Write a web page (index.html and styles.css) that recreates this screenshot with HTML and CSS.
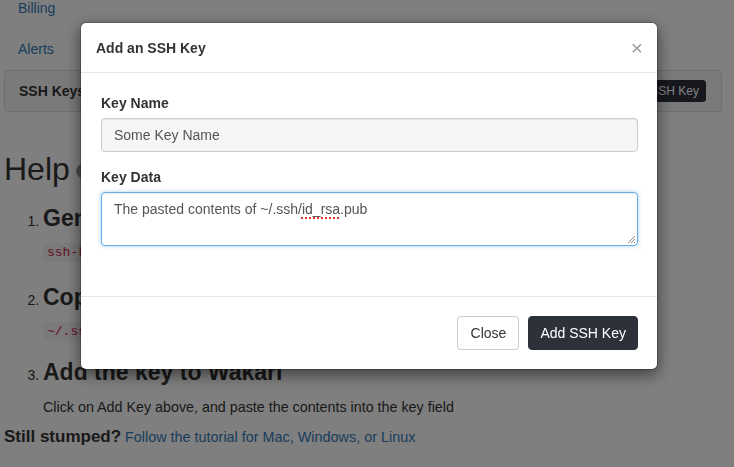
FILE: index.html
```html
<!DOCTYPE html>
<html>
<head>
<meta charset="utf-8">
<link rel="stylesheet" href="styles.css">
</head>
<body>
<div class="page">
  <ul class="nav">
    <li><a href="#">Billing</a></li>
    <li><a href="#">Alerts</a></li>
  </ul>
  <div class="panel">
    <span class="panel-title">SSH Keys</span>
    <button class="btn-xs">Add SSH Key</button>
  </div>
  <h1 class="help">Help <span class="help-icon"></span></h1>
  <ol class="steps">
    <li>
      <h3>Generate an SSH key</h3>
      <p><code>ssh-keygen -t rsa -C "you@example.com"</code></p>
    </li>
    <li class="second">
      <h3>Copy the public key</h3>
      <p><code>~/.ssh/id_rsa.pub</code></p>
    </li>
    <li>
      <h3>Add the key to Wakari</h3>
      <p class="plain">Click on Add Key above, and paste the contents into the key field</p>
    </li>
  </ol>
  <p class="stumped"><strong>Still stumped?</strong> <a href="#">Follow the tutorial for Mac, Windows, or Linux</a></p>
</div>

<div class="backdrop"></div>

<div class="modal">
  <div class="modal-header">
    <h4 class="modal-title">Add an SSH Key</h4>
    <span class="close">&times;</span>
  </div>
  <div class="modal-body">
    <div class="form-group">
      <label>Key Name</label>
      <div class="form-control">Some Key Name</div>
    </div>
    <div class="form-group">
      <label>Key Data</label>
      <div class="form-control textarea">The pasted contents of ~/.ssh/<span class="typo">id_rsa</span>.pub<svg class="grip" width="9" height="9" viewBox="0 0 9 9"><path d="M8 1 L1 8 M8 4 L4 8 M8 7 L7 8" stroke="#888" stroke-width="1" fill="none"/></svg></div>
    </div>
  </div>
  <div class="modal-footer">
    <button class="btn btn-default">Close</button>
    <button class="btn btn-dark">Add SSH Key</button>
  </div>
</div>
</body>
</html>
```

FILE: styles.css
```css
html, body {
  margin: 0;
  padding: 0;
  height: 100%;
  overflow: hidden;
}
body {
  font-family: "Liberation Sans", Arial, sans-serif;
  font-size: 14px;
  line-height: 20px;
  color: #333;
  background: #fff;
}
a { color: #337ab7; text-decoration: none; }

.page {
  padding: 0 12px 0 4px;
}
.nav {
  list-style: none;
  margin: -12px 0 0 0;
  padding: 0;
}
.nav li a {
  display: block;
  padding: 10px 14px 11px;
}
.panel {
  display: flex;
  align-items: center;
  justify-content: space-between;
  height: 40px;
  padding: 0 15px 0 14px;
  border: 1px solid #ddd;
  border-radius: 4px;
  background: #f5f5f5;
}
.panel-title { font-weight: bold; color: #333; }
.btn-xs {
  font-family: inherit;
  font-size: 12px;
  line-height: 18px;
  padding: 1px 6px;
  border: 1px solid #2c313a;
  border-radius: 3px;
  background: #2c313a;
  color: #fff;
}
.help {
  font-size: 32px;
  font-weight: normal;
  line-height: 36px;
  margin: 39px 0 0 0;
  display: flex;
  align-items: center;
}
.help-icon {
  display: inline-block;
  width: 14px;
  height: 14px;
  border-radius: 50%;
  background: #999;
  margin-left: 6px;
  margin-top: 4px;
}
.steps {
  margin: 18px 0 0 0;
  padding-left: 39px;
}
.steps li {
  margin: 0;
}
.steps li::marker { font-size: 14px; }
.steps h3 {
  font-size: 23px;
  font-weight: bold;
  line-height: 26px;
  margin: 0;
  display: inline-block;
  vertical-align: baseline;
}
.steps p {
  margin: 10px 0 21px 0;
}
.steps li.second p {
  margin-bottom: 17px;
}
.steps p.plain {
  margin: 12px 0 9px 0;
  font-size: 14.3px;
}
code {
  font-family: "Liberation Mono", "DejaVu Sans Mono", monospace;
  font-size: 13px;
  color: #c7254e;
  background: #f9f2f4;
  padding: 2px 4px;
  border-radius: 4px;
}
.stumped {
  margin: 0;
  line-height: 22px;
}
.stumped strong {
  font-size: 17px;
}
.stumped a {
  font-size: 14.4px;
}

.backdrop {
  position: fixed;
  inset: 0;
  background: rgba(0, 0, 0, 0.5);
}

.modal {
  position: fixed;
  top: 22px;
  left: 80px;
  width: 576px;
  background: #fff;
  border: 1px solid rgba(0, 0, 0, 0.2);
  border-radius: 6px;
  box-shadow: 0 5px 15px rgba(0, 0, 0, 0.5);
  background-clip: padding-box;
}
.modal-header {
  display: flex;
  align-items: center;
  justify-content: space-between;
  padding: 15px 15px 14px 15px;
  border-bottom: 1px solid #e5e5e5;
}
.modal-title {
  margin: 0;
  font-size: 14px;
  font-weight: bold;
  line-height: 20px;
  color: #333;
}
.close {
  font-size: 21px;
  font-weight: normal;
  line-height: 20px;
  color: #000;
  opacity: 0.4;
  margin-right: -1px;
}
.modal-body {
  padding: 20px 19px 50px 20px;
}
.form-group { margin-bottom: 15px; }
.form-group:last-child { margin-bottom: 0; }
label {
  display: block;
  font-weight: bold;
  margin-bottom: 5px;
  color: #333;
}
.form-control {
  box-sizing: border-box;
  height: 34px;
  padding: 6px 12px;
  border: 1px solid #ccc;
  border-radius: 4px;
  background: #f6f6f6;
  color: #555;
  box-shadow: inset 0 1px 1px rgba(0, 0, 0, 0.075);
}
.textarea {
  position: relative;
  height: 54px;
  padding-top: 6px;
  background: #fff;
  border-color: #66afe9;
  box-shadow: inset 0 1px 1px rgba(0, 0, 0, 0.075), 0 0 4px rgba(102, 175, 233, 0.6);
}
.typo {
  text-decoration: underline dotted #e0332b;
  text-decoration-thickness: 2px;
  text-underline-offset: 3px;
}
.grip {
  position: absolute;
  right: 1px;
  bottom: 1px;
}
.modal-footer {
  display: flex;
  justify-content: flex-end;
  gap: 9px;
  padding: 19px 19px 19px 20px;
  border-top: 1px solid #e5e5e5;
}
.btn {
  font-family: inherit;
  font-size: 14px;
  line-height: 20px;
  padding: 6px 12px;
  border-radius: 4px;
  border: 1px solid #ccc;
  cursor: pointer;
}
.btn-default { background: #fff; color: #333; padding: 6px 12px 6px 13px; }
.btn-dark { background: #2c313a; border-color: #2c313a; color: #fff; padding: 6px 11px; }
```
